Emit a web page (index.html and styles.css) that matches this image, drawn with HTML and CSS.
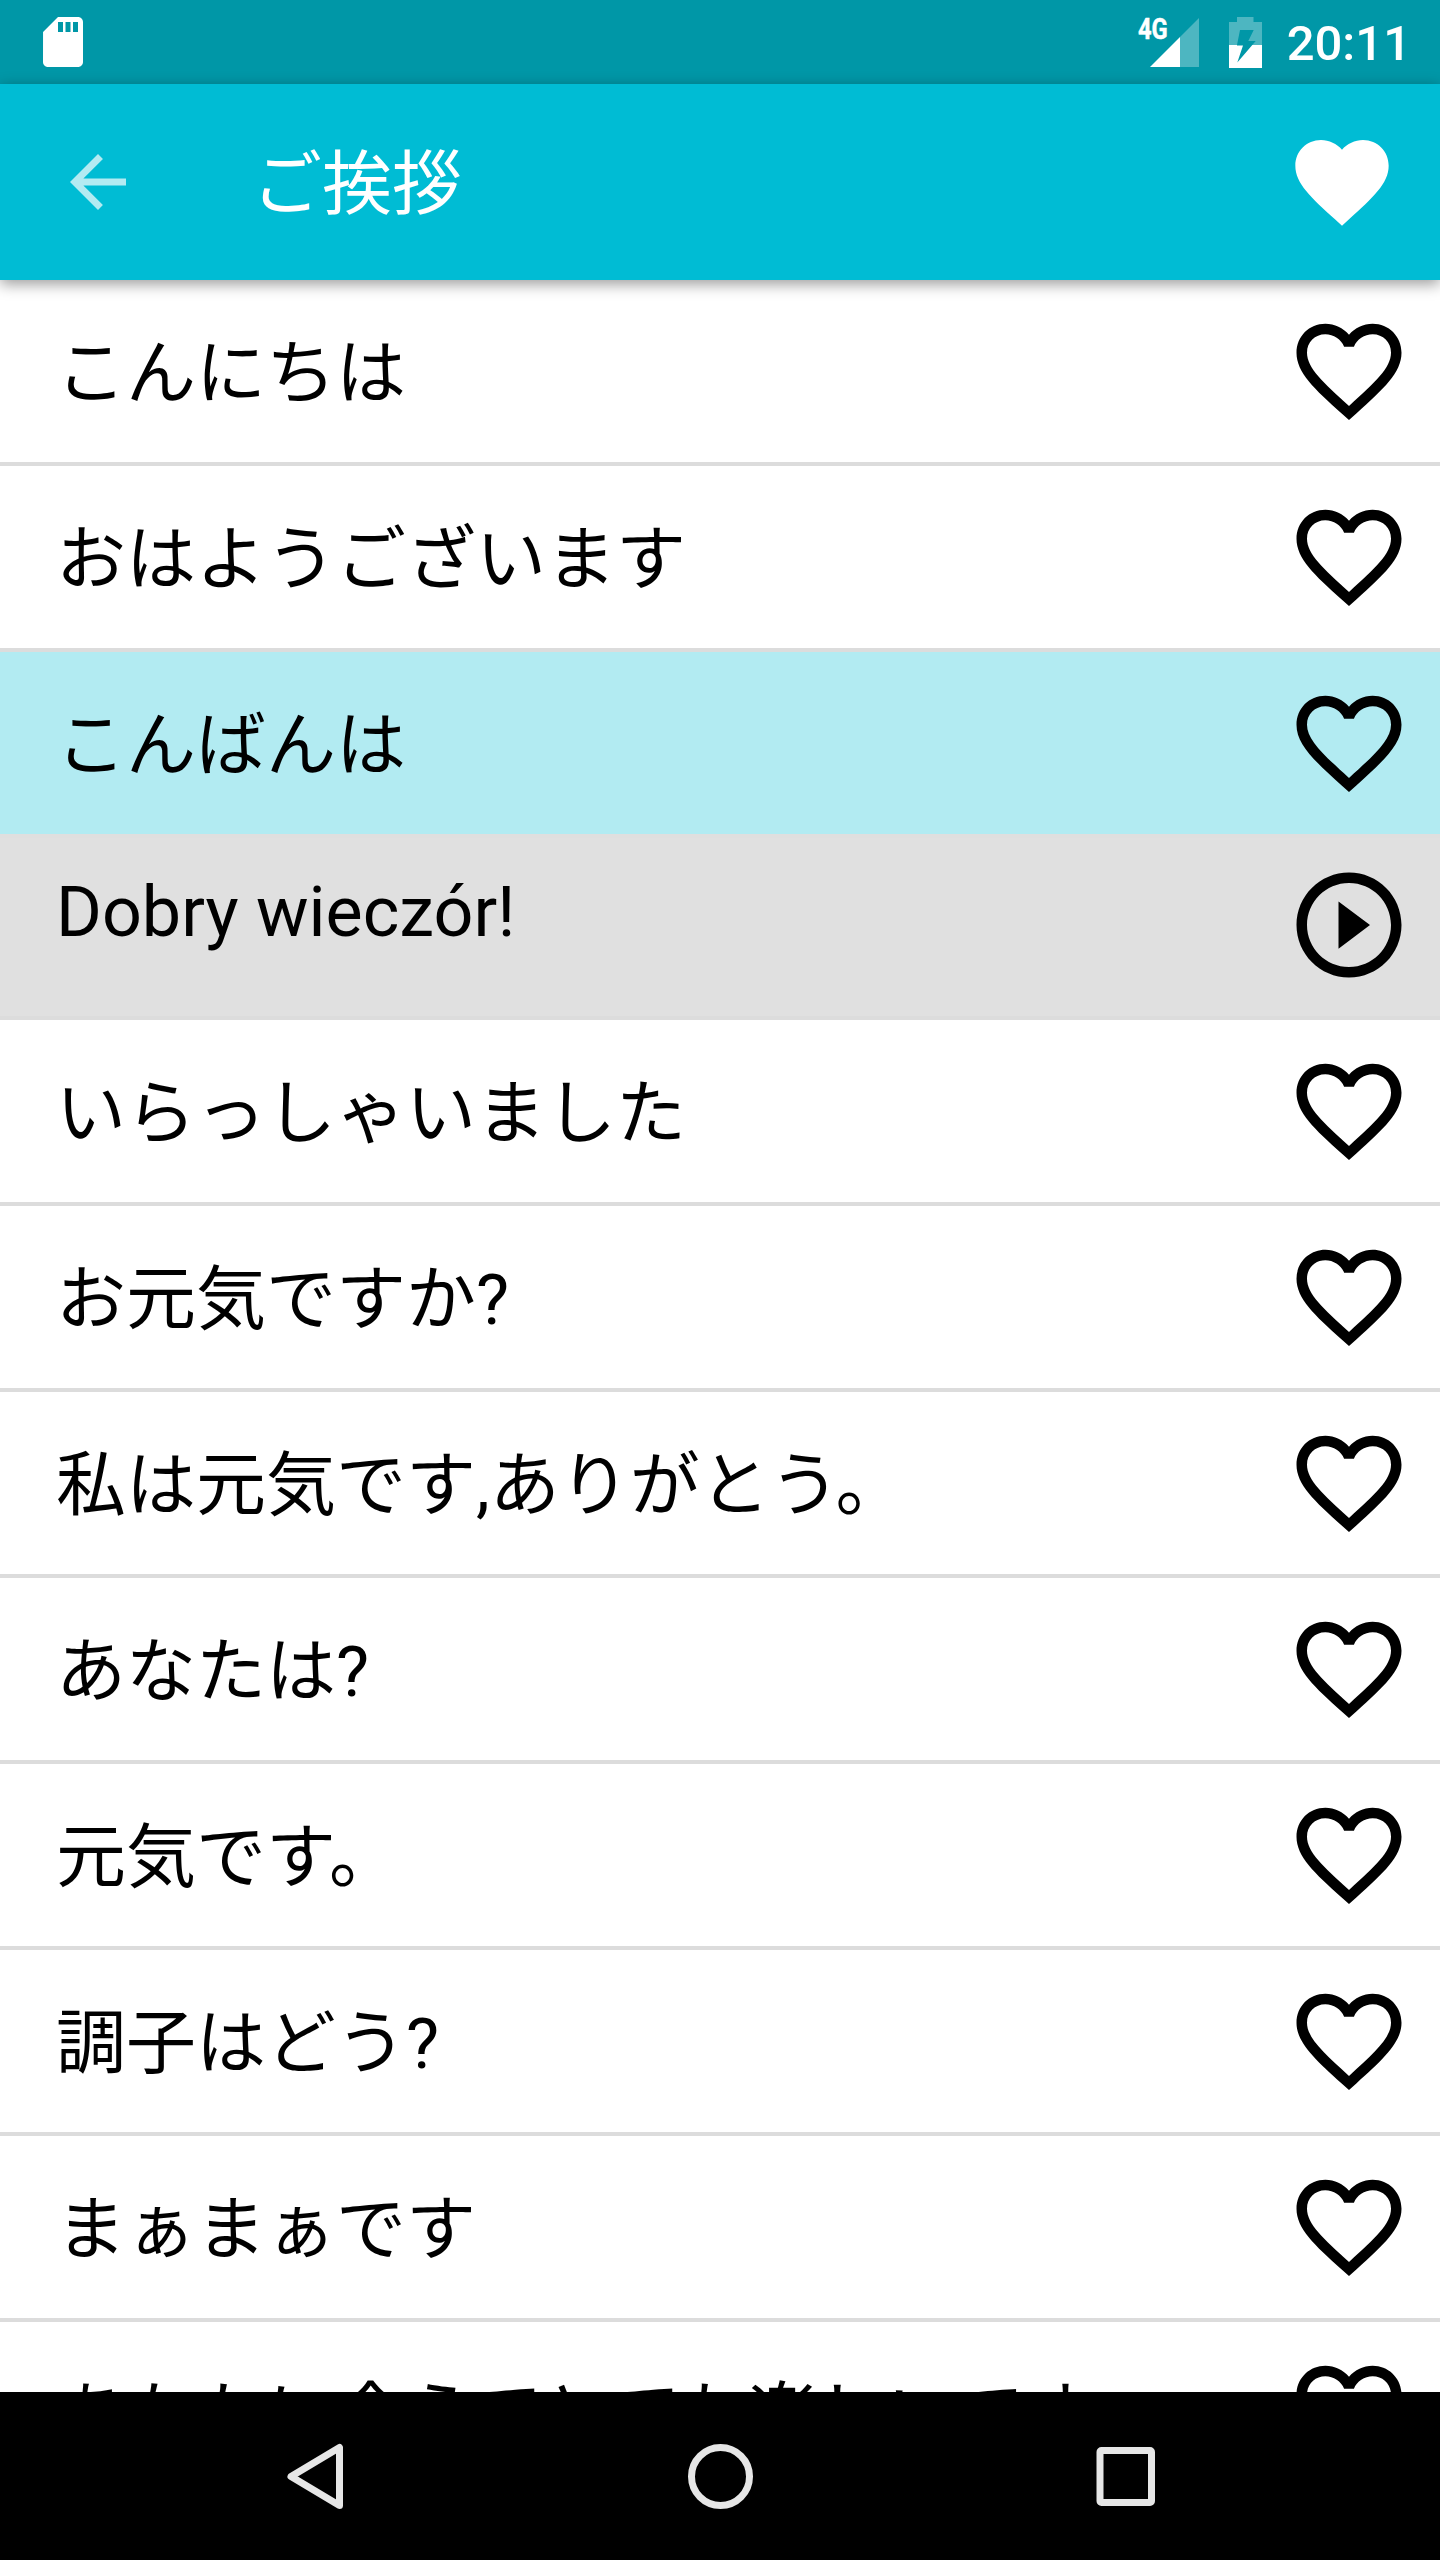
FILE: index.html
```html
<!DOCTYPE html>
<html lang="ja">
<head>
<meta charset="utf-8">
<title>ご挨拶</title>
<link rel="stylesheet" href="styles.css">
</head>
<body>
<svg class="defs" aria-hidden="true">
  <symbol id="heart-outline" viewBox="0 0 24 24"><path d="M16.5 3c-1.74 0-3.41.81-4.5 2.09C10.91 3.81 9.24 3 7.5 3 4.42 3 2 5.42 2 8.5c0 3.78 3.4 6.86 8.55 11.54L12 21.35l1.45-1.32C18.6 15.36 22 12.28 22 8.5 22 5.42 19.58 3 16.5 3zm-4.4 15.55l-.1.1-.1-.1C7.14 14.24 4 11.39 4 8.5 4 6.5 5.5 5 7.5 5c1.54 0 3.04.99 3.57 2.36h1.87C13.46 5.99 14.96 5 16.5 5c2 0 3.5 1.5 3.5 3.5 0 2.89-3.14 5.74-7.9 10.05z"/></symbol>
</svg>
<div class="screen">
  <header class="status-bar">
    <svg class="sd-card" viewBox="0 0 24 24"><path d="M18 2h-8L4.02 8 4 20c0 1.1.9 2 2 2h12c1.1 0 2-.9 2-2V4c0-1.1-.9-2-2-2zm-6 6h-2V4h2v4zm3 0h-2V4h2v4zm3 0h-2V4h2v4z"/></svg>
    <div class="status-right">
      <div class="network">
        <span class="network-label">4G</span>
        <svg class="signal" viewBox="0 0 49 49"><path opacity=".3" d="M49 0V49H30V19z"/><path d="M30 19V49H0z"/></svg>
      </div>
      <svg class="battery" viewBox="0 0 33 51"><path opacity=".3" d="M8 0H24.5V5H33V28H23.3L26.7 24H19.3L24.7 13H11L8 28H0V5H8z"/><path d="M0 28H8V28.5H14L8.3 45.5 23.3 28H33V51H0z"/></svg>
      <span class="clock">20:11</span>
    </div>
  </header>
  <nav class="app-bar">
    <svg class="back" viewBox="0 0 24 24"><path d="M20 11H7.83l5.59-5.59L12 4l-8 8 8 8 1.41-1.41L7.83 13H20v-2z"/></svg>
    <h1 class="title">ご挨拶</h1>
    <svg class="favorites" viewBox="0 0 24 24"><path d="M12 21.35l-1.45-1.32C5.4 15.36 2 12.28 2 8.5 2 5.42 4.42 3 7.5 3c1.74 0 3.41.81 4.5 2.09C13.09 3.81 14.76 3 16.5 3 19.58 3 22 5.42 22 8.5c0 3.78-3.4 6.86-8.55 11.54L12 21.35z"/></svg>
  </nav>
  <main class="phrases">
    <div class="row"><span class="phrase">こんにちは</span><svg class="icon"><use href="#heart-outline"/></svg></div>
    <div class="row"><span class="phrase">おはようございます</span><svg class="icon"><use href="#heart-outline"/></svg></div>
    <div class="row selected"><span class="phrase">こんばんは</span><svg class="icon"><use href="#heart-outline"/></svg></div>
    <div class="row translation"><span class="phrase" lang="pl">Dobry wieczór!</span><svg class="icon" viewBox="0 0 24 24"><path d="M10 16.5l6-4.5-6-4.5v9zM12 2C6.48 2 2 6.48 2 12s4.48 10 10 10 10-4.48 10-10S17.52 2 12 2zm0 18c-4.41 0-8-3.59-8-8s3.59-8 8-8 8 3.59 8 8-3.59 8-8 8z"/></svg></div>
    <div class="row"><span class="phrase">いらっしゃいました</span><svg class="icon"><use href="#heart-outline"/></svg></div>
    <div class="row"><span class="phrase">お元気ですか?</span><svg class="icon"><use href="#heart-outline"/></svg></div>
    <div class="row"><span class="phrase">私は元気です,ありがとう。</span><svg class="icon"><use href="#heart-outline"/></svg></div>
    <div class="row"><span class="phrase">あなたは?</span><svg class="icon"><use href="#heart-outline"/></svg></div>
    <div class="row"><span class="phrase">元気です。</span><svg class="icon"><use href="#heart-outline"/></svg></div>
    <div class="row"><span class="phrase">調子はどう?</span><svg class="icon"><use href="#heart-outline"/></svg></div>
    <div class="row"><span class="phrase">まぁまぁです</span><svg class="icon"><use href="#heart-outline"/></svg></div>
    <div class="row"><span class="phrase">あなたに会えてとても楽しいです</span><svg class="icon"><use href="#heart-outline"/></svg></div>
  </main>
  <footer class="nav-bar">
    <svg viewBox="0 0 90 90"><path d="M69.5 17.5V75.5L21 46.5z"/></svg>
    <svg viewBox="0 0 90 90"><circle cx="45.5" cy="46.5" r="29"/></svg>
    <svg viewBox="0 0 90 90"><rect x="20" y="20.5" width="51.5" height="52" rx="1.5"/></svg>
  </footer>
</div>
</body>
</html>
```
FILE: styles.css
```css
* { box-sizing: border-box; }

body {
  margin: 0;
  background: #fff;
  color: #000;
  font-family: Roboto, "Noto Sans CJK JP", sans-serif;
}

.defs { display: none; }

.screen {
  display: flex;
  flex-direction: column;
  width: 1440px;
  height: 2560px;
  overflow: hidden;
}

svg { display: block; flex: none; fill: currentColor; }

.status-bar {
  display: flex;
  justify-content: space-between;
  align-items: center;
  flex: none;
  height: 84px;
  padding: 0 29px 0 33px;
  background: #0097a7;
  color: #fff;
}

.sd-card { width: 60px; height: 60px; }

.status-right { display: flex; align-items: center; }

.network {
  display: flex;
  align-items: flex-start;
  margin-right: 30px;
}

.network-label {
  width: 12px;
  font-size: 30px;
  font-weight: 700;
  line-height: 22px;
  white-space: nowrap;
  transform: scaleX(.79);
  transform-origin: left;
  -webkit-text-stroke: .5px currentColor;
}

.signal { width: 49px; height: 49px; }

.battery { width: 33px; height: 51px; margin-right: 25px; }

.clock {
  padding-top: 4px;
  font-size: 49px;
  font-weight: 500;
  line-height: 80px;
}

.app-bar {
  display: flex;
  align-items: center;
  flex: none;
  height: 196px;
  padding: 0 42px 0 56px;
  background: #00bcd4;
  color: #fff;
  box-shadow: 0 4px 14px rgba(0, 0, 0, .4);
  z-index: 1;
}

.back { width: 84px; height: 84px; opacity: .7; }

.title {
  flex: 1;
  margin: 0 0 0 112px;
  padding-top: 5px;
  font-size: 70px;
  font-weight: 400;
  line-height: 84px;
}

.favorites { width: 112px; height: 112px; }

.phrases { flex: 1; min-height: 0; overflow: hidden; }

.row {
  display: flex;
  justify-content: space-between;
  align-items: center;
  height: 186px;
  padding: 0 28px 0 56px;
  border-bottom: 4px solid #dcdcdc;
  font-size: 70px;
  line-height: 84px;
  white-space: nowrap;
}

.phrase { padding-top: 5px; }

.icon { width: 126px; height: 126px; }

.selected { background: #b2ebf2; border-bottom-color: #dfdfdf; }

.translation {
  align-items: flex-start;
  height: 182px;
  padding-top: 24px;
  background: #e0e0e0;
}

.translation .phrase { padding-top: 8px; }

.nav-bar {
  display: flex;
  justify-content: space-between;
  flex: none;
  height: 168px;
  padding: 38px 270px;
  background: #000;
}

.nav-bar svg {
  width: 90px;
  height: 90px;
  fill: none;
  stroke: #e6e6e6;
  stroke-width: 7;
  stroke-linejoin: round;
}
```
